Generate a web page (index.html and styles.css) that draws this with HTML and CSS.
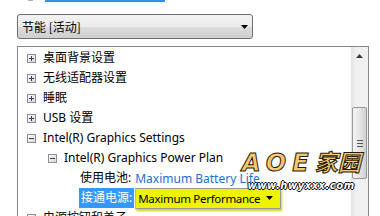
FILE: index.html
```html
<!DOCTYPE html>
<html>
<head>
<meta charset="utf-8">
<link rel="stylesheet" href="styles.css">
</head>
<body>
<div class="topbar"><span class="tick"></span><span class="bluebar"></span></div>
<div class="combo">
  <span class="combo-text">节能 [活动]</span>
  <svg class="combo-arrow" width="7" height="4" viewBox="0 0 7 4"><path d="M0 0H7L3.5 4Z" fill="#000"/></svg>
</div>
<div class="tree">
  <div class="items">
    <div class="row l1"><span class="pm"><svg width="9" height="9" viewBox="0 0 9 9"><rect x="0.5" y="0.5" width="8" height="8" fill="url(#g)" stroke="#8f8f8f"/><path d="M2 4.5H7M4.5 2V7" stroke="#2b3f6a"/></svg></span><span class="label">桌面背景设置</span></div>
    <div class="row l1"><span class="pm"><svg width="9" height="9" viewBox="0 0 9 9"><rect x="0.5" y="0.5" width="8" height="8" fill="url(#g)" stroke="#8f8f8f"/><path d="M2 4.5H7M4.5 2V7" stroke="#2b3f6a"/></svg></span><span class="label">无线适配器设置</span></div>
    <div class="row l1"><span class="pm"><svg width="9" height="9" viewBox="0 0 9 9"><rect x="0.5" y="0.5" width="8" height="8" fill="url(#g)" stroke="#8f8f8f"/><path d="M2 4.5H7M4.5 2V7" stroke="#2b3f6a"/></svg></span><span class="label">睡眠</span></div>
    <div class="row l1"><span class="pm"><svg width="9" height="9" viewBox="0 0 9 9"><rect x="0.5" y="0.5" width="8" height="8" fill="url(#g)" stroke="#8f8f8f"/><path d="M2 4.5H7M4.5 2V7" stroke="#2b3f6a"/></svg></span><span class="label">USB 设置</span></div>
    <div class="row l1"><span class="pm"><svg width="9" height="9" viewBox="0 0 9 9"><rect x="0.5" y="0.5" width="8" height="8" fill="url(#g)" stroke="#8f8f8f"/><path d="M2 4.5H7" stroke="#2b3f6a"/></svg></span><span class="label">Intel(R) Graphics Settings</span></div>
    <div class="row l2"><span class="pm"><svg width="9" height="9" viewBox="0 0 9 9"><rect x="0.5" y="0.5" width="8" height="8" fill="url(#g)" stroke="#8f8f8f"/><path d="M2 4.5H7" stroke="#2b3f6a"/></svg></span><span class="label">Intel(R) Graphics Power Plan</span></div>
    <div class="row l3"><span class="label">使用电池:</span><span class="link">Maximum Battery Life</span></div>
    <div class="row l3"><span class="label sel">接通电源:</span><span class="inline-combo"><span class="ic-text">Maximum Performance</span><svg class="ic-arrow" width="7" height="4" viewBox="0 0 7 4"><path d="M0 0H7L3.5 4Z" fill="#000"/></svg></span></div>
    <div class="row l1"><span class="pm"><svg width="9" height="9" viewBox="0 0 9 9"><rect x="0.5" y="0.5" width="8" height="8" fill="url(#g)" stroke="#8f8f8f"/><path d="M2 4.5H7M4.5 2V7" stroke="#2b3f6a"/></svg></span><span class="label">电源按钮和盖子</span></div>
  </div>
  <div class="scroll">
    <div class="sb-btn"><svg width="7" height="4" viewBox="0 0 7 4"><path d="M0 4H7L3.5 0Z" fill="#3c3c3c"/></svg></div>
    <div class="sb-space"></div>
    <div class="sb-thumb"><span class="grip"></span><span class="grip"></span><span class="grip"></span></div>
  </div>
</div>
<div class="watermark">
  <div class="wm-big"><span class="wm-latin">AOE</span><span class="wm-cjk">家园</span></div>
  <div class="wm-small">www.hwyxxx.com</div>
</div>
<svg width="0" height="0" class="defs"><defs><linearGradient id="g" x1="0" y1="0" x2="1" y2="1"><stop offset="0" stop-color="#ffffff"/><stop offset="1" stop-color="#d4d4d4"/></linearGradient></defs></svg>
</body>
</html>
```
FILE: styles.css
```css
html, body {
  margin: 0;
  padding: 0;
  background: #fff;
  width: 380px;
  height: 216px;
  overflow: hidden;
}
body {
  position: relative;
  font-family: "Noto Sans", "Noto Sans CJK SC", sans-serif;
  font-size: 12px;
  color: #000;
}
.defs { position: absolute; }
.topbar {
  height: 2px;
  display: flex;
}
.tick {
  margin-left: 28px;
  width: 5px;
  height: 1px;
  background: #b0b0b0;
}
.bluebar {
  margin-left: 12px;
  width: 120px;
  height: 2px;
  background: #3390f0;
}
.combo {
  margin: 12px 0 0 17px;
  width: 234px;
  height: 23px;
  border: 1px solid #707070;
  border-radius: 3px;
  background: linear-gradient(#f2f2f2 0%, #ebebeb 50%, #dddddd 51%, #cfcfcf 100%);
  display: flex;
  align-items: center;
}
.combo-text {
  margin-left: 4px;
  flex: 1;
  font-family: "Noto Sans CJK SC", sans-serif;
  font-size: 12px;
}
.combo-arrow {
  flex-shrink: 0;
  margin-right: 4px;
}
.tree {
  margin: 7px 0 0 17px;
  width: 350px;
  height: 200px;
  border: 1px solid #828790;
  display: flex;
}
.items {
  flex: 1;
  padding-top: 1px;
  overflow: hidden;
}
.row {
  height: 20px;
  display: flex;
  align-items: center;
  white-space: nowrap;
}
.row.l1 { padding-left: 9px; }
.row.l2 { padding-left: 30px; }
.row.l3 { padding-left: 62px; }
.pm {
  width: 9px;
  height: 9px;
  margin-right: 7px;
  display: flex;
  flex-shrink: 0;
}
.label {
  line-height: 18px;
}
.label.sel {
  background: #3399ff;
  color: #fff;
  padding: 1px 2px;
  margin-left: -1px;
}
.l3 .label:not(.sel) { margin-right: 4px; }
.link {
  color: #1e6fcf;
}
.inline-combo {
  display: flex;
  align-items: center;
  height: 19px;
  margin-left: 1px;
  width: 144px;
  border: 1px solid #9a9a9a;
  border-left-color: #b8b8b8;
  background: #eef300;
  box-shadow: 1px 2px 2px #c9cf20;
}
.ic-text {
  margin-left: 2px;
  flex: 1;
  overflow: hidden;
  font-size: 11.5px;
  letter-spacing: -0.3px;
}
.ic-arrow {
  flex-shrink: 0;
  margin-right: 7px;
}
.scroll {
  width: 17px;
  background: linear-gradient(90deg, #e3e3e3, #f0f0f0 30%, #f0f0f0);
  display: flex;
  flex-direction: column;
}
.sb-btn {
  height: 17px;
  display: flex;
  align-items: center;
  justify-content: center;
}
.sb-space { height: 43px; }
.sb-thumb {
  margin-left: 1px;
  width: 13px;
  height: 70px;
  border: 1px solid #979797;
  border-radius: 2px;
  background: linear-gradient(90deg, #f4f4f4, #e6e6e6 50%, #d0d0d0);
  display: flex;
  flex-direction: column;
  align-items: center;
  justify-content: center;
  gap: 2px;
}
.grip {
  width: 6px;
  height: 1px;
  background: #555;
}
.watermark {
  position: absolute;
  left: 242px;
  top: 147px;
  width: 118px;
  text-align: center;
}
.wm-big {
  font-weight: bold;
  font-style: italic;
  line-height: 28px;
  color: #f6c874;
  -webkit-text-stroke: 1px #2a1a00;
  white-space: nowrap;
}
.wm-latin {
  font-family: "DejaVu Sans", sans-serif;
  font-size: 24px;
  letter-spacing: 6px;
}
.wm-cjk {
  font-family: "Noto Sans CJK SC", sans-serif;
  font-size: 23px;
}
.wm-small {
  font-family: "DejaVu Sans", sans-serif;
  font-weight: bold;
  font-style: italic;
  font-size: 10px;
  line-height: 10px;
  color: #fff;
  letter-spacing: 0.5px;
  text-shadow: 1px 0 0 #000, -1px 0 0 #000, 0 1px 0 #000, 0 -1px 0 #000;
}
```
